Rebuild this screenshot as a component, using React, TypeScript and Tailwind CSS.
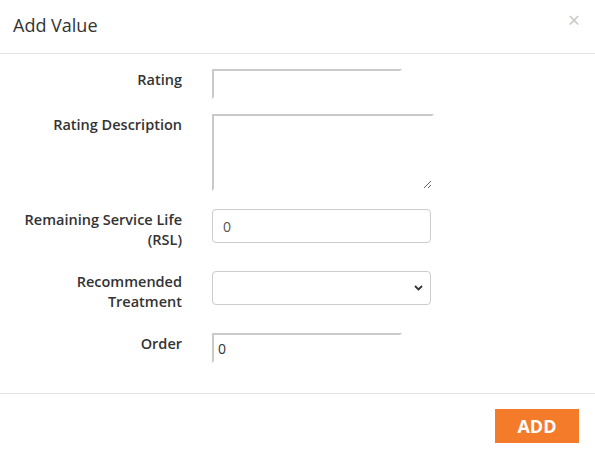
import { ReactNode } from 'react'

interface IRowProps {
  label: ReactNode
  children: ReactNode
  className?: string
}

const Row = ({ label, children, className }: IRowProps) => {
  return (
    <div className={'flex items-start ' + (className ?? '')}>
      <label className="w-[182px] shrink-0 pt-px text-right text-[14.5px] leading-[20px] font-semibold text-[#333]">
        {label}
      </label>
      <div className="ml-[30px]">{children}</div>
    </div>
  )
}

export default function App() {
  return (
    <div
      className="w-[595px] h-[456px] bg-white flex flex-col"
      style={{ fontFamily: '"Open Sans", "Liberation Sans", sans-serif' }}
    >
      {/* header */}
      <div className="h-[54px] shrink-0 border-b border-[#e5e5e5] flex items-start justify-between">
        <h4 className="ml-[13px] mt-[12px] text-[18px] leading-[26px] text-[#333]">
          Add Value
        </h4>
        <button className="mr-[15px] mt-[7px] text-[21px] leading-[26px] text-[#c8c8c8]">
          ×
        </button>
      </div>

      {/* body */}
      <div className="flex-1 pt-[15px]">
        <Row label="Rating" className="mb-[15px]">
          <input
            type="text"
            className="block w-[190px] h-[30px] border-2 border-[#c9c9c9] border-r-white border-b-white outline-none"
          />
        </Row>
        <Row label="Rating Description" className="mb-[18px]">
          <textarea className="block w-[222px] h-[77px] border-2 border-[#c9c9c9] border-r-white border-b-white outline-none resize" />
        </Row>
        <Row
          label={
            <>
              Remaining Service Life
              <br />
              (RSL)
            </>
          }
          className="h-[41px] mb-[21px]"
        >
          <input
            type="text"
            defaultValue="0"
            className="block w-[219px] h-[34px] rounded-[4px] border border-[#ccc] px-[10px] text-[14px] text-[#555] outline-none"
          />
        </Row>
        <Row
          label={
            <>
              Recommended
              <br />
              Treatment
            </>
          }
          className="h-[41px] mb-[21px]"
        >
          <div className="relative w-[219px] h-[34px] rounded-[4px] border border-[#ccc]">
            <select className="w-full h-full appearance-none bg-transparent outline-none px-[12px] text-[14px]" />
            <svg
              className="absolute right-[7px] top-[13px] pointer-events-none"
              width="9"
              height="6"
              viewBox="0 0 9 6"
            >
              <path d="M1 1l3.5 3.5L8 1" fill="none" stroke="#333" strokeWidth="1.8" />
            </svg>
          </div>
        </Row>
        <Row label="Order">
          <input
            type="text"
            defaultValue="0"
            className="block w-[190px] h-[30px] border-2 border-[#c9c9c9] border-r-white border-b-white px-[4px] text-[14px] text-[#333] outline-none"
          />
        </Row>
      </div>

      {/* footer */}
      <div className="h-[63px] shrink-0 border-t border-[#e5e5e5] flex items-start justify-end pt-[15px] pr-[16px]">
        <button className="w-[84px] h-[34px] bg-[#f47b2a] text-white text-[18px] font-bold leading-[34px]">
          ADD
        </button>
      </div>
    </div>
  )
}
